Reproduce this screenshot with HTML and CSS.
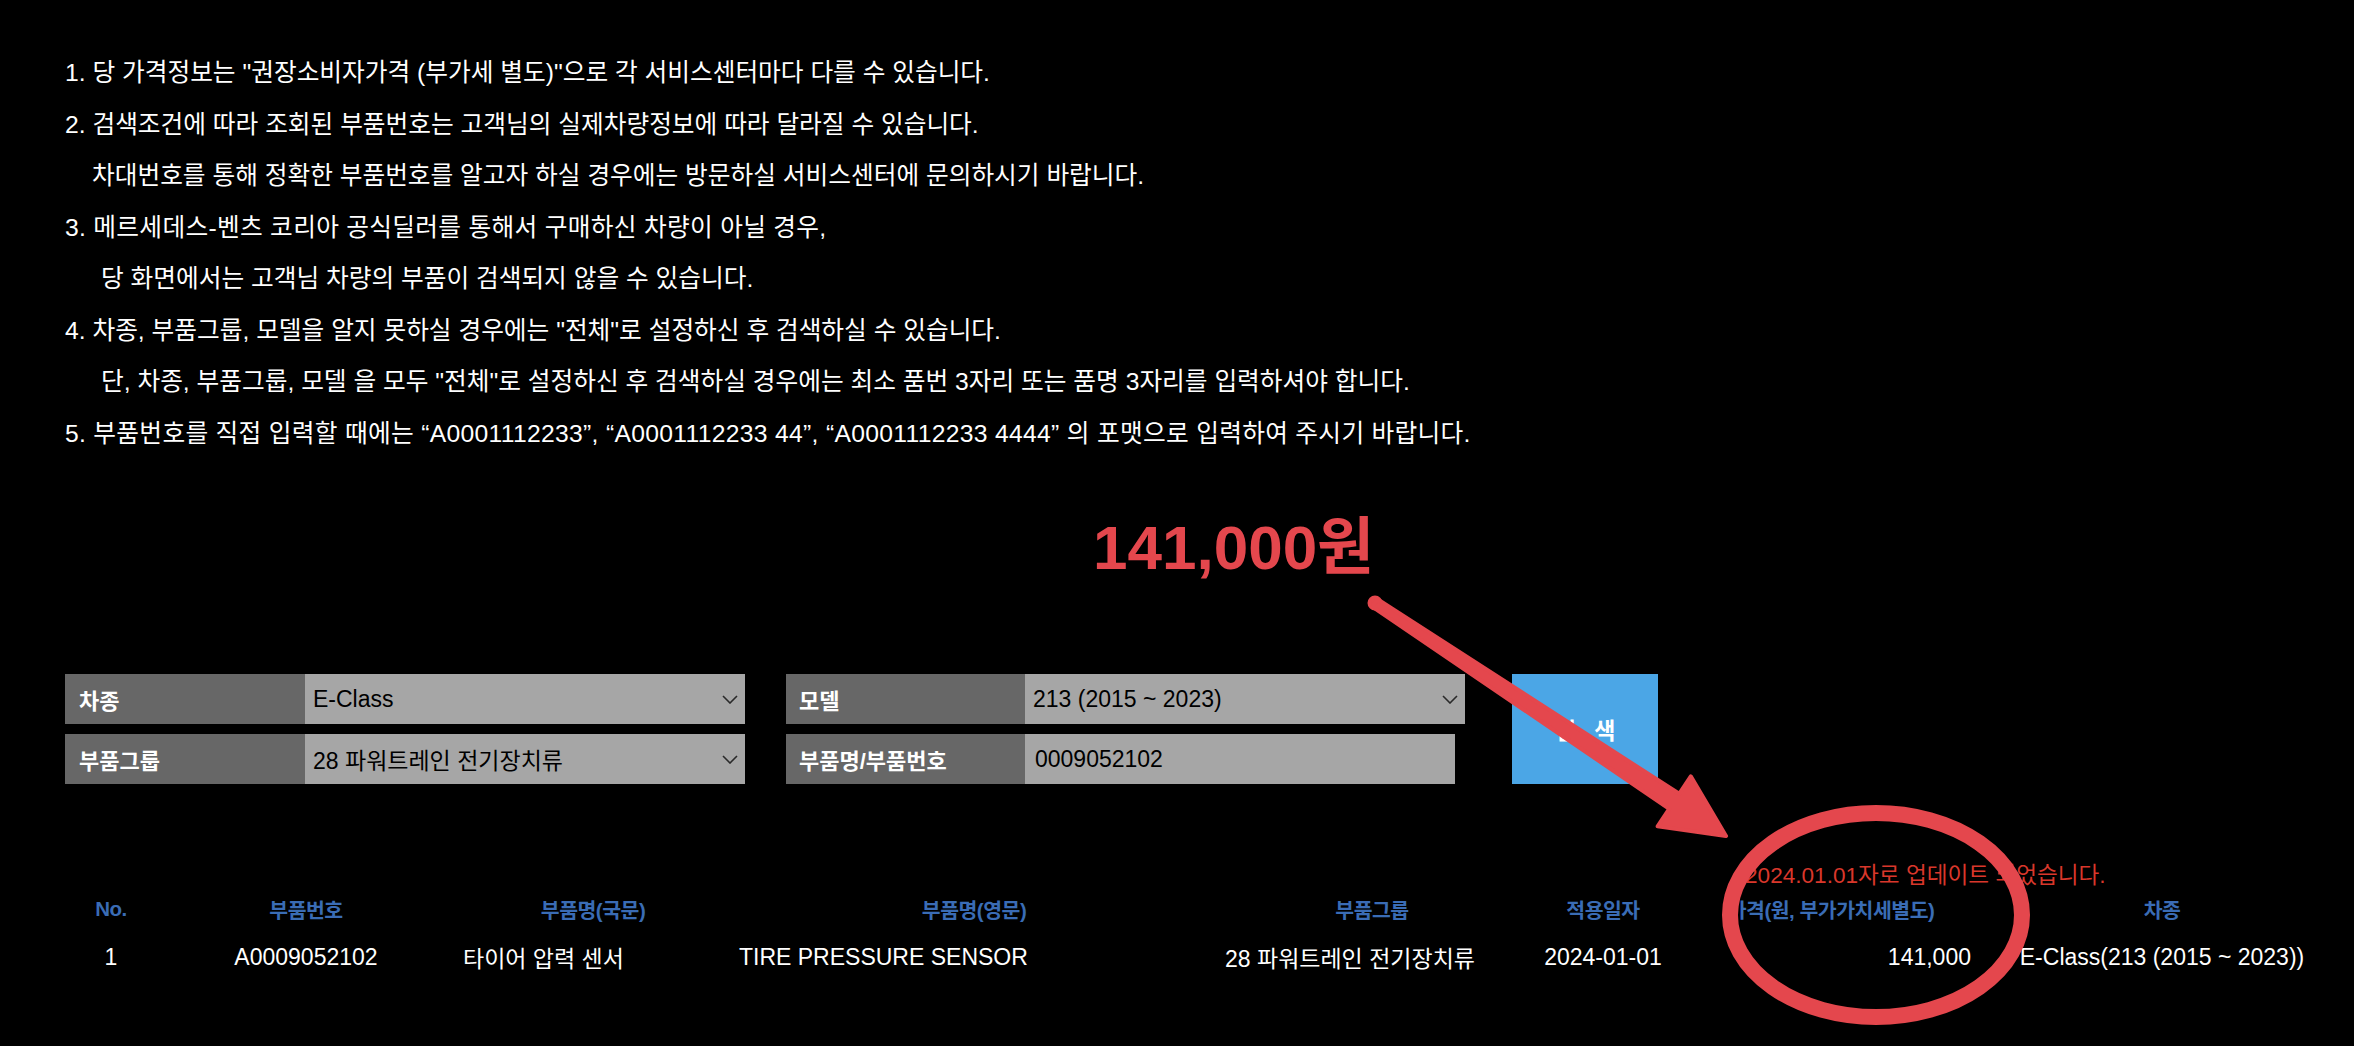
FILE: index.html
```html
<!DOCTYPE html>
<html lang="ko">
<head>
<meta charset="utf-8">
<title>부품 가격 조회</title>
<link rel="stylesheet" href="styles.css">
</head>
<body>
<div class="page">
  <div class="notice">
    <p>1. 당 가격정보는 "권장소비자가격 (부가세 별도)"으로 각 서비스센터마다 다를 수 있습니다.</p>
    <p>2. 검색조건에 따라 조회된 부품번호는 고객님의 실제차량정보에 따라 달라질 수 있습니다.</p>
    <p class="indent-a">차대번호를 통해 정확한 부품번호를 알고자 하실 경우에는 방문하실 서비스센터에 문의하시기 바랍니다.</p>
    <p class="wide">3. 메르세데스-벤츠 코리아 공식딜러를 통해서 구매하신 차량이 아닐 경우,</p>
    <p class="indent-b">당 화면에서는 고객님 차량의 부품이 검색되지 않을 수 있습니다.</p>
    <p>4. 차종, 부품그룹, 모델을 알지 못하실 경우에는 "전체"로 설정하신 후 검색하실 수 있습니다.</p>
    <p class="indent-b">단, 차종, 부품그룹, 모델 을 모두 "전체"로 설정하신 후 검색하실 경우에는 최소 품번 3자리 또는 품명 3자리를 입력하셔야 합니다.</p>
    <p class="wide">5. 부품번호를 직접 입력할 때에는 “A0001112233”, “A0001112233 44”, “A0001112233 4444” 의 포맷으로 입력하여 주시기 바랍니다.</p>
  </div>

  <div class="search">
    <div class="group group-left">
      <div class="field">
        <div class="label">차종</div>
        <div class="value">E-Class<svg class="chev" viewBox="0 0 16 9"><polyline points="1,1 8,8 15,1"/></svg></div>
      </div>
      <div class="field">
        <div class="label">부품그룹</div>
        <div class="value">28 파워트레인 전기장치류<svg class="chev" viewBox="0 0 16 9"><polyline points="1,1 8,8 15,1"/></svg></div>
      </div>
    </div>
    <div class="group group-right">
      <div class="field">
        <div class="label">모델</div>
        <div class="value">213 (2015 ~ 2023)<svg class="chev" viewBox="0 0 16 9"><polyline points="1,1 8,8 15,1"/></svg></div>
      </div>
      <div class="field">
        <div class="label">부품명/부품번호</div>
        <div class="value input">0009052102</div>
      </div>
    </div>
    <div class="btn">검 색</div>
  </div>

  <div class="result">
    <div class="update-note">2024.01.01자로 업데이트 되었습니다.</div>
    <table class="parts">
      <colgroup>
        <col class="c-no"><col class="c-pn"><col class="c-kr"><col class="c-en"><col class="c-grp"><col class="c-date"><col class="c-price"><col class="c-car">
      </colgroup>
      <thead>
        <tr>
          <th>No.</th><th>부품번호</th><th>부품명(국문)</th><th>부품명(영문)</th><th>부품그룹</th><th>적용일자</th><th>가격(원, 부가가치세별도)</th><th>차종</th>
        </tr>
      </thead>
      <tbody>
        <tr>
          <td class="center">1</td>
          <td class="center">A0009052102</td>
          <td>타이어 압력 센서</td>
          <td>TIRE PRESSURE SENSOR</td>
          <td>28 파워트레인 전기장치류</td>
          <td class="center">2024-01-01</td>
          <td class="right">141,000</td>
          <td class="center">E-Class(213 (2015 ~ 2023))</td>
        </tr>
      </tbody>
    </table>
  </div>

  <div class="annot-price">141,000원</div>
  <svg class="annot" width="2354" height="1046" viewBox="0 0 2354 1046">
    <ellipse cx="1876" cy="915" rx="146" ry="102" class="ring"/>
    <circle cx="1375" cy="603" r="5.5" class="arrow"/>
    <polygon class="arrow" points="1377.5,599.2 1679.2,793.8 1690.8,776.3 1726,836 1657.6,826.3 1669.2,808.8 1372.5,606.8"/>
  </svg>
</div>
</body>
</html>
```

FILE: styles.css
```css
html, body {
  margin: 0;
  padding: 0;
  background: #000;
}

body {
  color: #fff;
  font-family: "Liberation Sans", "Noto Sans CJK KR", sans-serif;
  font-size: 23px;
}

.page {
  position: relative;
  width: 2354px;
  height: 1046px;
  padding-left: 65px;
  box-sizing: border-box;
  overflow: hidden;
}

/* notice text */
.notice {
  padding-top: 47px;
  font-size: 24.7px;
}

.notice p {
  margin: 0;
  line-height: 51.5px;
  white-space: nowrap;
}

.notice p.wide { letter-spacing: 0.3px; }

.indent-a { padding-left: 27px; }
.indent-b { padding-left: 36px; }

/* search form */
.search {
  display: flex;
  margin-top: 215px;
  height: 110px;
}

.group {
  display: flex;
  flex-direction: column;
  gap: 10px;
}

.group-left { width: 680px; }
.group-right { width: 679px; margin-left: 41px; }

.field {
  display: flex;
  height: 50px;
}

.label {
  width: 240px;
  flex: none;
  box-sizing: border-box;
  padding-left: 14px;
  background: #676767;
  color: #fff;
  font-weight: bold;
  font-size: 22px;
  display: flex;
  align-items: center;
}

.group-right .label {
  width: 239px;
  padding-left: 13px;
}

.value {
  flex: 1;
  box-sizing: border-box;
  padding-left: 8px;
  background: #a6a6a6;
  color: #000;
  display: flex;
  align-items: center;
  white-space: nowrap;
}

.value.input {
  flex: none;
  width: 430px;
  padding-left: 10px;
}

.chev {
  width: 16px;
  height: 9px;
  margin-left: auto;
  margin-right: 7px;
  fill: none;
  stroke: #2a2a2a;
  stroke-width: 1.6;
}

.btn {
  width: 146px;
  height: 110px;
  margin-left: 47px;
  background: #4ba6e6;
  color: #fff;
  font-weight: bold;
  font-size: 23px;
  word-spacing: 12px;
  display: flex;
  align-items: center;
  justify-content: center;
}

/* results */
.update-note {
  margin-top: 77px;
  margin-left: 1680px;
  color: #d9372b;
  font-size: 22.6px;
  line-height: 30px;
  white-space: nowrap;
}

.parts {
  width: 2276px;
  table-layout: fixed;
  border-collapse: collapse;
}

.c-no { width: 92px; }
.c-pn { width: 298px; }
.c-kr { width: 276px; }
.c-en { width: 486px; }
.c-grp { width: 310px; }
.c-date { width: 152px; }
.c-price { width: 304px; }
.c-car { width: 358px; }

.parts th {
  height: 36px;
  padding: 0;
  color: #3a6cb5;
  font-weight: bold;
  font-size: 20.5px;
  letter-spacing: -0.5px;
  text-align: center;
  white-space: nowrap;
}

.parts td {
  height: 60px;
  padding: 0 8px;
  font-size: 23px;
  color: #fff;
  text-align: left;
  white-space: nowrap;
}

.parts td.center { text-align: center; padding: 0; }
.parts td.right { text-align: right; padding-right: 12px; }

/* Skitch-style annotations drawn over the page */
.annot-price {
  position: absolute;
  left: 1093px;
  top: 517px;
  font-size: 62px;
  line-height: 62px;
  font-weight: bold;
  color: #e4474d;
  white-space: nowrap;
}

.annot {
  position: absolute;
  left: 0;
  top: 0;
  pointer-events: none;
}

.ring {
  fill: none;
  stroke: #e4474d;
  stroke-width: 16;
}

.arrow {
  fill: #e4474d;
  stroke: #e4474d;
  stroke-width: 4;
  stroke-linejoin: round;
}
```
